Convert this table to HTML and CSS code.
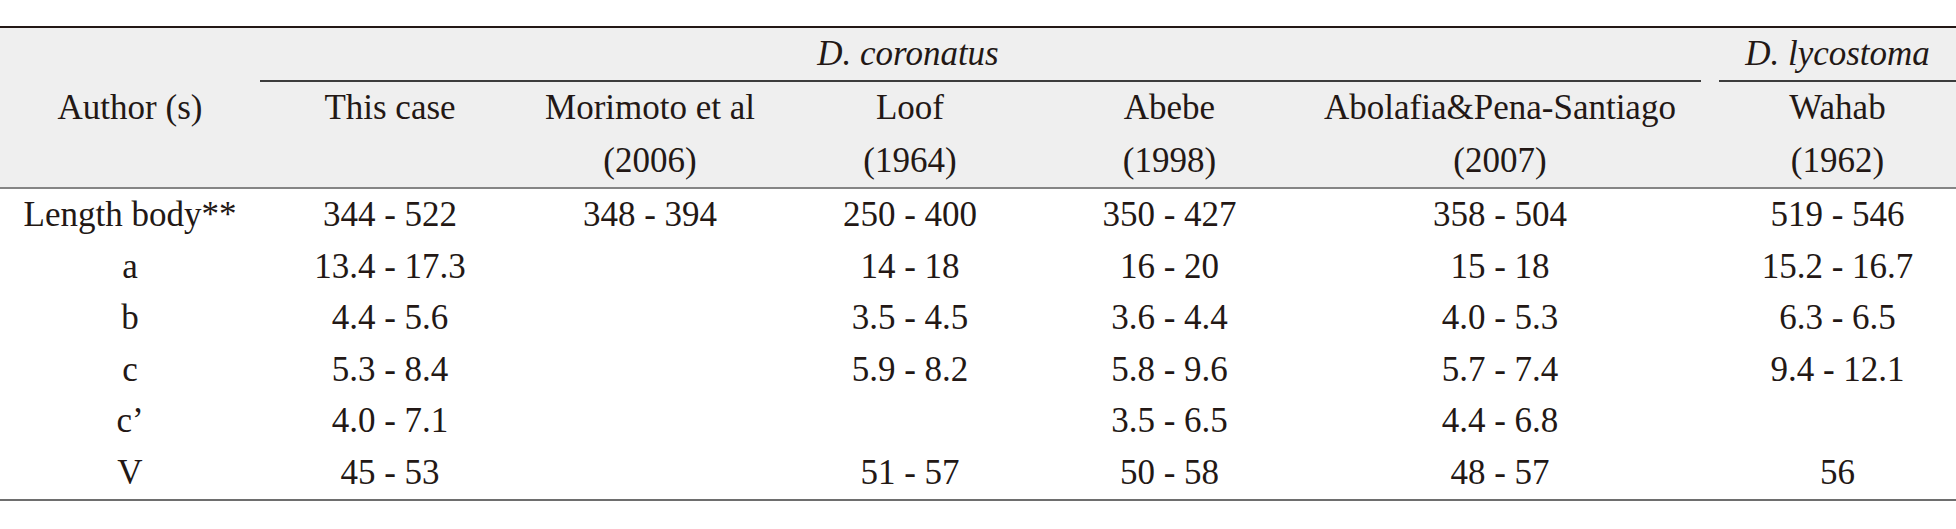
FILE: index.html
```html
<!DOCTYPE html>
<html lang="en">
<head>
<meta charset="utf-8">
<title>Morphometrics table</title>
<link rel="stylesheet" href="styles.css">
</head>
<body>
<table class="morpho">
  <colgroup>
    <col class="c1"><col class="c2"><col class="c3"><col class="c4"><col class="c5"><col class="c6"><col class="c7">
  </colgroup>
  <thead>
    <tr class="hrow1">
      <th class="author" rowspan="2">Author (s)</th>
      <th class="grp" colspan="5"><div class="under coronatus"><i>D. coronatus</i></div></th>
      <th class="grp lyco"><div class="under"><i>D. lycostoma</i></div></th>
    </tr>
    <tr class="hrow2">
      <th>This case</th>
      <th>Morimoto et al<br>(2006)</th>
      <th>Loof<br>(1964)</th>
      <th>Abebe<br>(1998)</th>
      <th>Abolafia&amp;Pena-Santiago<br>(2007)</th>
      <th class="lyco">Wahab<br>(1962)</th>
    </tr>
  </thead>
  <tbody>
    <tr><td>Length body**</td><td>344 - 522</td><td>348 - 394</td><td>250 - 400</td><td>350 - 427</td><td>358 - 504</td><td class="lyco">519 - 546</td></tr>
    <tr><td>a</td><td>13.4 - 17.3</td><td></td><td>14 - 18</td><td>16 - 20</td><td>15 - 18</td><td class="lyco">15.2 - 16.7</td></tr>
    <tr><td>b</td><td>4.4 - 5.6</td><td></td><td>3.5 - 4.5</td><td>3.6 - 4.4</td><td>4.0 - 5.3</td><td class="lyco">6.3 - 6.5</td></tr>
    <tr><td>c</td><td>5.3 - 8.4</td><td></td><td>5.9 - 8.2</td><td>5.8 - 9.6</td><td>5.7 - 7.4</td><td class="lyco">9.4 - 12.1</td></tr>
    <tr><td>c&#8217;</td><td>4.0 - 7.1</td><td></td><td></td><td>3.5 - 6.5</td><td>4.4 - 6.8</td><td class="lyco"></td></tr>
    <tr><td>V</td><td>45 - 53</td><td></td><td>51 - 57</td><td>50 - 58</td><td>48 - 57</td><td class="lyco">56</td></tr>
  </tbody>
</table>
</body>
</html>
```

FILE: styles.css
```css
html, body {
  margin: 0;
  padding: 0;
  background: #ffffff;
}

body {
  font-family: "Liberation Serif", serif;
  font-size: 35px;
  color: #231815;
}

.morpho {
  width: 1956px;
  table-layout: fixed;
  border-collapse: separate;
  border-spacing: 0;
  margin-top: 26px;
  border-top: 2px solid #231815;
  border-bottom: 2px solid #6e6e6e;
  font-family: "Liberation Serif", serif;
}

.morpho th,
.morpho td {
  font-family: "Liberation Serif", serif;
}

.morpho col.c1 { width: 260px; }
.morpho col.c2 { width: 260px; }
.morpho col.c3 { width: 260px; }
.morpho col.c4 { width: 260px; }
.morpho col.c5 { width: 259px; }
.morpho col.c6 { width: 402px; }
.morpho col.c7 { width: 255px; }

.morpho th {
  font-weight: normal;
  background: #efefef;
  padding: 0;
  text-align: center;
  white-space: nowrap;
}

.morpho th i {
  font-style: italic;
}

.hrow1 th.grp {
  vertical-align: bottom;
}

.under {
  line-height: 52px;
  border-bottom: 2px solid #3c3c3c;
}

.under.coronatus {
  padding-right: 145px;
}

.morpho .lyco {
  padding-left: 18px;
}

.morpho th.author {
  vertical-align: middle;
  border-bottom: 2px solid #858585;
}

.hrow2 th {
  line-height: 52.5px;
  vertical-align: top;
  border-bottom: 2px solid #858585;
}

.morpho td {
  padding: 0;
  height: 51.6px;
  line-height: 51.6px;
  text-align: center;
  white-space: nowrap;
}
```
